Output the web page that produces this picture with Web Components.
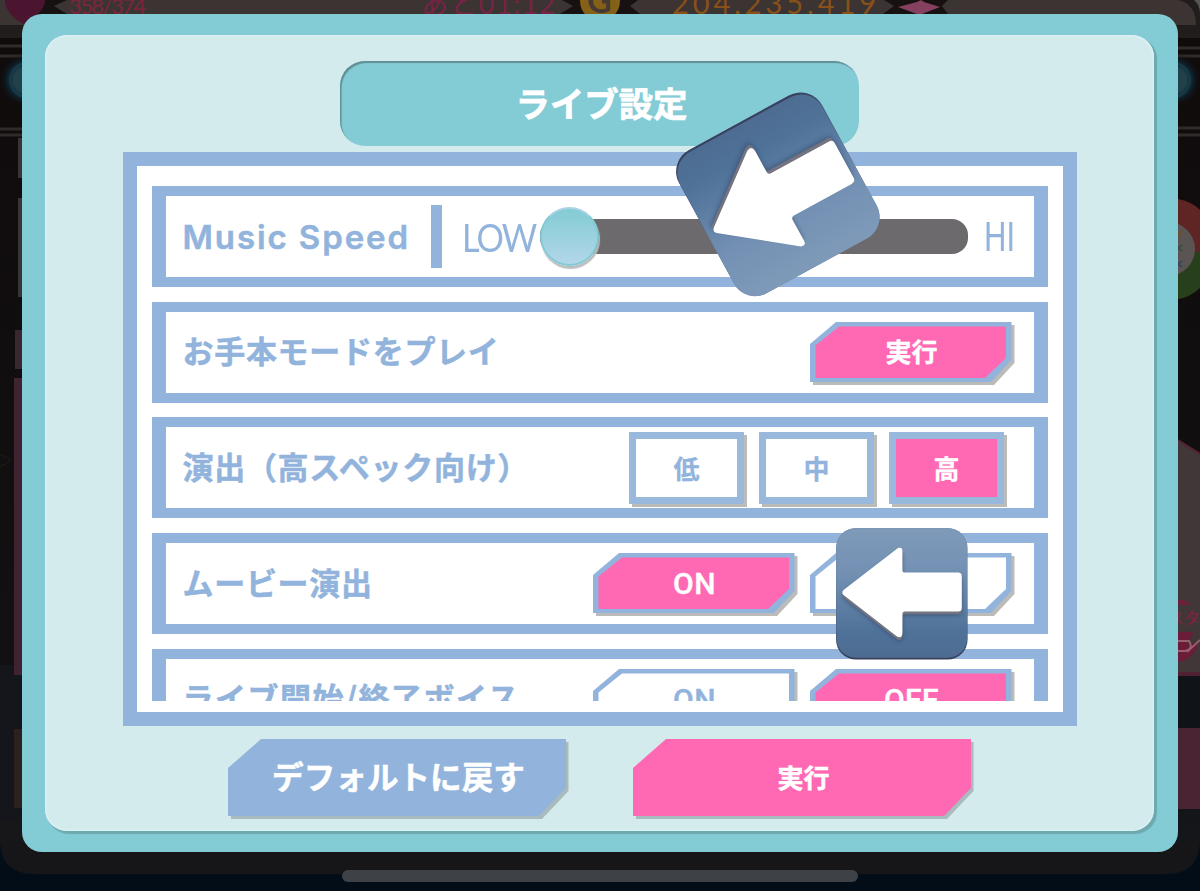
<!DOCTYPE html>
<html lang="ja">
<head>
<meta charset="utf-8">
<title>ライブ設定</title>
<style>
body {
    margin: 0;
    width: 1200px;
    height: 891px;
    overflow: hidden;
    background: #100c0d;
    font-family: "Noto Sans CJK JP", sans-serif;
    --line: #92b4dc;
    --teal: #83ccd6;
    --pale: #d4ebed;
    --pink: #ff69b4;
}
</style>
</head>
<body>
<game-screen>
    <settings-dialog heading="ライブ設定">
        <setting-row label="Music Speed" latin>
            <speed-slider low="LOW" high="HI"></speed-slider>
        </setting-row>
        <setting-row label="お手本モードをプレイ">
            <cut-button active>実行</cut-button>
        </setting-row>
        <setting-row label="演出（高スペック向け）" tight>
            <square-button>低</square-button>
            <square-button>中</square-button>
            <square-button active>高</square-button>
        </setting-row>
        <setting-row label="ムービー演出">
            <cut-button active latin>ON</cut-button>
            <cut-button></cut-button>
        </setting-row>
        <setting-row label="ライブ開始/終了ボイス" wide>
            <cut-button latin>ON</cut-button>
            <cut-button active latin>OFF</cut-button>
        </setting-row>
        <footer-button slot="footer">デフォルトに戻す</footer-button>
        <footer-button slot="footer" primary>実行</footer-button>
    </settings-dialog>
    <arrow-sticker slot="overlay" style="left: 836.3px; top: 527.5px"></arrow-sticker>
    <arrow-sticker slot="overlay" style="left: 712.3px; top: 127.5px; transform: rotate(-28.6deg) scale(1.24, -1.24)"></arrow-sticker>
</game-screen>

<script>
class GameScreen extends HTMLElement {
    constructor() {
        super();
        this.attachShadow({mode: 'open'});
    }

    connectedCallback() {
        this.shadowRoot.innerHTML = `
            <style>
            :host {
                display: block;
                position: relative;
                box-sizing: border-box;
                width: 1200px;
                height: 891px;
                padding: 14px 22px 0;
                overflow: hidden;
            }
            .backdrop {
                position: absolute;
                inset: 0;
            }
            .home-bar {
                position: relative;
                width: 516px;
                height: 12px;
                margin: 18px auto 0;
                border-radius: 6px;
                background: #3e4247;
            }
            </style>
            <svg class="backdrop" width="1200" height="891" viewBox="0 0 1200 891">
                <defs>
                    <linearGradient id="floor" x2="0" y2="1">
                        <stop offset="0" stop-color="#100b0b"/>
                        <stop offset=".75" stop-color="#121012"/>
                        <stop offset="1" stop-color="#15171c"/>
                    </linearGradient>
                    <radialGradient id="glow">
                        <stop offset=".45" stop-color="#21404a"/>
                        <stop offset=".65" stop-color="#0d2935"/>
                        <stop offset="1" stop-color="#0f0d10" stop-opacity="0"/>
                    </radialGradient>
                </defs>
                <rect width="1200" height="891" fill="#020d18"/>
                <path d="M0 0H1200V843Q1198 874 1166 874H34Q2 874 0 843Z" fill="url(#floor)"/>
                <rect y="665" width="24" height="165" fill="#14161b"/>
                <rect y="820" width="24" height="22" fill="#17171a"/>
                <path d="M2 842H1198Q1195 874 1160 874H38Q5 874 2 842Z" fill="#161518"/>
                <!-- status bar -->
                <rect width="1200" height="38" fill="#211d1c"/>
                <path d="M0 0H1178Q1196 4 1196 25H0Z" fill="#3b3433"/>
                <path d="M1194 0Q1200 5 1200 14V0Z" fill="#555"/>
                <path d="M0 46H24M0 56H24M1176 48H1200M1176 56H1200M0 129H24M0 135H24M1176 128H1200M1176 135H1200" stroke="#302b2b" stroke-width="3"/>
                <path d="M39 0H67L54 6L67 14H27L16 0Z" fill="#171212"/>
                <path d="M5 0C5 13 18 21 24 24C32 19 45 11 45 0Z" fill="#4b1530"/>
                <path d="M562 0H638L630 6L640 14H560L573 6Z" fill="#171111"/>
                <circle cx="600" cy="1" r="20" fill="#856118"/>
                <path d="M884 0H948L942 6L948 14H883L894 6Z" fill="#171111"/>
                <path d="M898 7L917 2L921 0L924 2L940 7L922 14H917Z" fill="#85405f"/>
                <g font-family="Lato" font-size="25">
                    <text x="69" y="14" font-size="22" textLength="77" fill="#7d253d">358/374</text>
                    <text x="421" y="14" font-size="27" textLength="134" fill="#782345" style="font-family:Lato,'Noto Sans CJK JP'">あと01:12</text>
                    <text x="587" y="13" font-size="34" font-weight="700" fill="#463a31">G</text>
                    <text x="672" y="14" font-size="29" textLength="204" fill="#895018">204,235,419</text>
                </g>
                <circle cx="26" cy="80" r="27" fill="url(#glow)"/>
                <circle cx="1174" cy="80" r="27" fill="url(#glow)"/>
                <circle cx="27" cy="80" r="17" fill="none" stroke="#173a49" stroke-width="2"/>
                <circle cx="1173" cy="80" r="17" fill="none" stroke="#173a49" stroke-width="2"/>
                <!-- left edge of the song list -->
                <path d="M18 138H22V178H18ZM18 198H22V297H18Z" fill="#393435"/>
                <rect x="15" y="330" width="7" height="39" fill="#3b2731"/>
                <rect x="14" y="378" width="8" height="297" fill="#402332"/>
                <rect x="14" y="729" width="8" height="79" fill="#2c211f"/>
                <!-- member card on the right -->
                <path d="M1178 199Q1193 202 1200 210V252H1178Z" fill="#5f2524"/>
                <path d="M1178 252H1200V288Q1189 298 1178 299Z" fill="#27401b"/>
                <circle cx="1168" cy="249" r="27" fill="#5a5453"/>
                <path d="M1182 231L1178 234L1182 236" fill="none" stroke="#7a4a24" stroke-width="1.5"/>
                <path d="M1182 245L1178 248L1182 251" fill="none" stroke="#2b5238" stroke-width="1.5"/>
                <path d="M1182 261L1178 264L1182 267" fill="none" stroke="#2c455e" stroke-width="1.5"/>
                <path d="M1178 440L1200 453V675H1178Z" fill="#413738"/>
                <path d="M1178 440L1200 454" stroke="#582034" stroke-width="2"/>
                <path d="M1178 600Q1185 599 1191 605H1178Z" fill="#6f1f3a"/>
                <text x="1168" y="624" font-family="Noto Sans CJK JP" font-size="16" font-weight="500" fill="#7a2440">スター</text>
                <path d="M1178 632H1194L1186 645Q1200 640 1197 648Q1190 661 1178 662Z" fill="#6a1c38"/>
                <path d="M1174 641H1189Q1194 649 1185 651H1175M1187 652L1200 640" fill="none" stroke="#96606d" stroke-width="2"/>
                <rect x="1178" y="672" width="22" height="4" fill="#512033"/>
                <rect x="1178" y="676" width="22" height="52" fill="#101318"/>
                <rect x="1178" y="728" width="22" height="81" fill="#4b2434"/>
                <path d="M0 455Q10 458 10 460Q7 465 0 466" fill="none" stroke="#201a19"/>
            </svg>
            <slot></slot>
            <div class="home-bar"></div>
            <slot name="overlay"></slot>
        `;
    }
}

class SettingsDialog extends HTMLElement {
    constructor() {
        super();
        this.attachShadow({mode: 'open'});
    }

    connectedCallback() {
        this.shadowRoot.innerHTML = `
            <style>
            * {
                box-sizing: border-box;
            }
            :host {
                display: block;
                position: relative;
                box-sizing: border-box;
                width: 1156px;
                height: 838px;
                padding: 21px 24px 21px 23px;
                border-radius: 20px;
                background: var(--teal);
            }
            .panel {
                height: 796px;
                border-radius: 22px;
                padding: 26px 77px 0 78px;
                background: var(--pale);
                box-shadow: 2.5px 2.5px 1px #6da9ae, inset 0 0 2px 1px #def3f5;
            }
            h1 {
                width: 519px;
                height: 85px;
                margin: 0 auto 6px 217px;
                border-radius: 25px;
                background: var(--teal);
                box-shadow: inset 1.5px 2px 1px #618f92;
                color: #fff;
                font-size: 34.4px;
                font-weight: 700;
                -webkit-text-stroke: .7px #fff;
                line-height: 83px;
                padding-left: 4px;
                text-align: center;
            }
            .frame {
                width: 954px;
                height: 574px;
                border: 14px solid var(--line);
                background: #fff;
                padding: 20px 15px 11px;
            }
            .list {
                height: 515px;
                overflow: hidden;
                display: flex;
                flex-direction: column;
                gap: 14.7px;
            }
            .footer {
                display: flex;
                gap: 64px;
                padding: 13px 0 0 105px;
            }
            </style>
            <div class="panel">
                <h1>${this.getAttribute('heading')}</h1>
                <div class="frame">
                    <div class="list"><slot></slot></div>
                </div>
                <div class="footer"><slot name="footer"></slot></div>
            </div>
        `;
    }
}

class SettingRow extends HTMLElement {
    constructor() {
        super();
        this.attachShadow({mode: 'open'});
    }

    connectedCallback() {
        this.shadowRoot.innerHTML = `
            <style>
            :host {
                display: flex;
                flex: none;
                align-items: center;
                box-sizing: border-box;
                height: 101px;
                border: solid var(--line);
                border-width: 10px 14px;
                padding: 0 19px 0 16.5px;
                background: #fff;
            }
            :host([latin]) {
                padding-right: 16px;
            }
            :host([tight]) {
                padding-right: 27px;
            }
            .label {
                flex: 1;
                color: var(--line);
                font-size: 31px;
                font-weight: 700;
                -webkit-text-stroke: .5px var(--line);
                letter-spacing: .7px;
                line-height: 40px;
                padding-bottom: 4px;
                white-space: nowrap;
            }
            :host([wide]) .label {
                letter-spacing: 1.5px;
            }
            :host([latin]) .label {
                flex: none;
                width: 248.5px;
                padding-bottom: 0;
                font-family: Inter, sans-serif;
                font-size: 33px;
                font-weight: 600;
                letter-spacing: 1.9px;
            }
            .controls {
                display: flex;
                gap: 12px;
            }
            </style>
            <span class="label">${this.getAttribute('label')}</span>
            <div class="controls"><slot></slot></div>
        `;
    }
}

class SpeedSlider extends HTMLElement {
    constructor() {
        super();
        this.attachShadow({mode: 'open'});
    }

    connectedCallback() {
        this.shadowRoot.innerHTML = `
            <style>
            :host {
                display: flex;
                align-items: center;
                width: 590px;
                height: 81px;
                color: var(--line);
                font-family: Lato, sans-serif;
            }
            :host > * {
                flex: none;
            }
            .divider {
                width: 11px;
                height: 63px;
                background: var(--line);
            }
            .low {
                width: 78px;
                margin-left: 20px;
                font-size: 38px;
                line-height: 46px;
                letter-spacing: -2px;
                white-space: nowrap;
                transform: scaleX(.9);
                transform-origin: left;
            }
            .track {
                display: flex;
                align-items: center;
                width: 428px;
                height: 35px;
                border-radius: 16px;
                background: #6c6a6d;
            }
            .knob {
                box-sizing: border-box;
                width: 59px;
                height: 59px;
                border: 2px solid #83cad4;
                border-top-color: #a9d4e5;
                border-radius: 50%;
                background: linear-gradient(#83cbd4, #b2d7ea);
                box-shadow: 1px 3px 1px #bbbec0;
            }
            .high {
                margin-left: 16px;
                font-family: Roboto, sans-serif;
                font-size: 41px;
                line-height: 46px;
                transform: scaleX(.77);
                transform-origin: left;
            }
            </style>
            <span class="divider"></span>
            <span class="low">${this.getAttribute('low')}</span>
            <span class="track"><span class="knob"></span></span>
            <span class="high">${this.getAttribute('high')}</span>
        `;
    }
}

class CutButton extends HTMLElement {
    constructor() {
        super();
        this.attachShadow({mode: 'open'});
    }

    connectedCallback() {
        const active = this.hasAttribute('active');
        this.shadowRoot.innerHTML = `
            <style>
            :host {
                display: grid;
                width: 205px;
                height: 63px;
                margin: 2px 0 0;
                color: ${active ? '#fff' : 'var(--line)'};
            }
            svg, .text {
                grid-area: 1 / 1;
            }
            .text {
                font-size: 26px;
                font-weight: 700;
                -webkit-text-stroke: .4px;
                line-height: 58px;
                text-align: center;
                padding-right: 2px;
            }
            :host([latin]) .text {
                font-family: Roboto, sans-serif;
                font-size: 30px;
                font-weight: 500;
                line-height: 61px;
                letter-spacing: .5px;
            }
            </style>
            <svg width="205" height="63" viewBox="0 0 205 63">
                <path d="M29 3H204.500V41L184 63H3V25Z" fill="#bbbcba"/>
                <path d="M26 0H201.500V38L181 60H0V22Z" fill="var(--line)"/>
                <path d="M29 4.500H196V36L175 56H5.500V23.500Z" fill="${active ? 'var(--pink)' : '#fff'}"/>
            </svg>
            <span class="text"><slot></slot></span>
        `;
    }
}

class SquareButton extends HTMLElement {
    constructor() {
        super();
        this.attachShadow({mode: 'open'});
    }

    connectedCallback() {
        this.shadowRoot.innerHTML = `
            <style>
            :host {
                display: block;
                box-sizing: border-box;
                width: 115px;
                height: 72px;
                margin: 1px 3px 0 0;
                border: 7px solid #98b8dc;
                background: #fff;
                box-shadow: 3px 3px #bbbcba;
                color: var(--line);
                font-size: 26px;
                font-weight: 700;
                -webkit-text-stroke: .3px;
                line-height: 58px;
                text-align: center;
            }
            :host([active]) {
                background: var(--pink);
                color: #fff;
            }
            </style>
            <slot></slot>
        `;
    }
}

class FooterButton extends HTMLElement {
    constructor() {
        super();
        this.attachShadow({mode: 'open'});
    }

    connectedCallback() {
        const primary = this.hasAttribute('primary');
        this.shadowRoot.innerHTML = `
            <style>
            :host {
                display: grid;
                width: 341px;
                height: 80px;
            }
            svg, .text {
                grid-area: 1 / 1;
            }
            .text {
                color: #fff;
                font-size: ${primary ? 26 : 31.6}px;
                font-weight: 700;
                -webkit-text-stroke: .5px #fff;
                line-height: ${primary ? 76 : 73}px;
                text-align: center;
            }
            </style>
            <svg width="341" height="80" viewBox="0 0 341 80">
                <path d="M36 3H340.500V52L314 80H3V32Z" fill="#aabbbe"/>
                <path d="M33 0H338V49L311 77H0V29Z" fill="${primary ? 'var(--pink)' : 'var(--line)'}"/>
            </svg>
            <span class="text"><slot></slot></span>
        `;
    }
}

class ArrowSticker extends HTMLElement {
    constructor() {
        super();
        this.attachShadow({mode: 'open'});
    }

    connectedCallback() {
        this.shadowRoot.innerHTML = `
            <style>
            :host {
                display: block;
                position: absolute;
                width: 132px;
                height: 132px;
            }
            svg {
                display: block;
            }
            </style>
            <svg width="132" height="132" viewBox="0 0 132 132">
                <defs>
                    <linearGradient id="face" x2="0" y2="1">
                        <stop offset="0" stop-color="#7f9ab9"/>
                        <stop offset=".35" stop-color="#7390b3"/>
                        <stop offset=".8" stop-color="#4f7299"/>
                        <stop offset="1" stop-color="#4e6c91"/>
                    </linearGradient>
                    <linearGradient id="rim" x2="0" y2="1">
                        <stop offset=".3" stop-color="#7089a8"/>
                        <stop offset="1" stop-color="#37405e"/>
                    </linearGradient>
                    <filter id="soft" x="-20%" y="-20%" width="140%" height="140%">
                        <feGaussianBlur stdDeviation="2"/>
                    </filter>
                    <path id="arrow" d="M7.500 62L62 20Q66.400 18.500 66.400 23V42Q66.400 44.600 69 44.600H122Q125.800 44.600 125.800 48.500V80Q125.800 83.500 122 83.500H69Q66.400 83.500 66.400 86V105Q66 111 61 108.500L7.500 67Q5 64.500 7.500 62Z"/>
                </defs>
                <rect width="131.600" height="131.600" rx="20" fill="url(#rim)"/>
                <rect x=".5" y=".2" width="130.600" height="129.600" rx="19.500" fill="url(#face)"/>
                <use href="#arrow" y="4" fill="#2d4264" opacity=".6" filter="url(#soft)"/>
                <use href="#arrow" y="2.800" fill="#737480"/>
                <use href="#arrow" fill="#fff"/>
            </svg>
        `;
    }
}

customElements.define('game-screen', GameScreen);
customElements.define('settings-dialog', SettingsDialog);
customElements.define('setting-row', SettingRow);
customElements.define('speed-slider', SpeedSlider);
customElements.define('cut-button', CutButton);
customElements.define('square-button', SquareButton);
customElements.define('footer-button', FooterButton);
customElements.define('arrow-sticker', ArrowSticker);
</script>
</body>
</html>
